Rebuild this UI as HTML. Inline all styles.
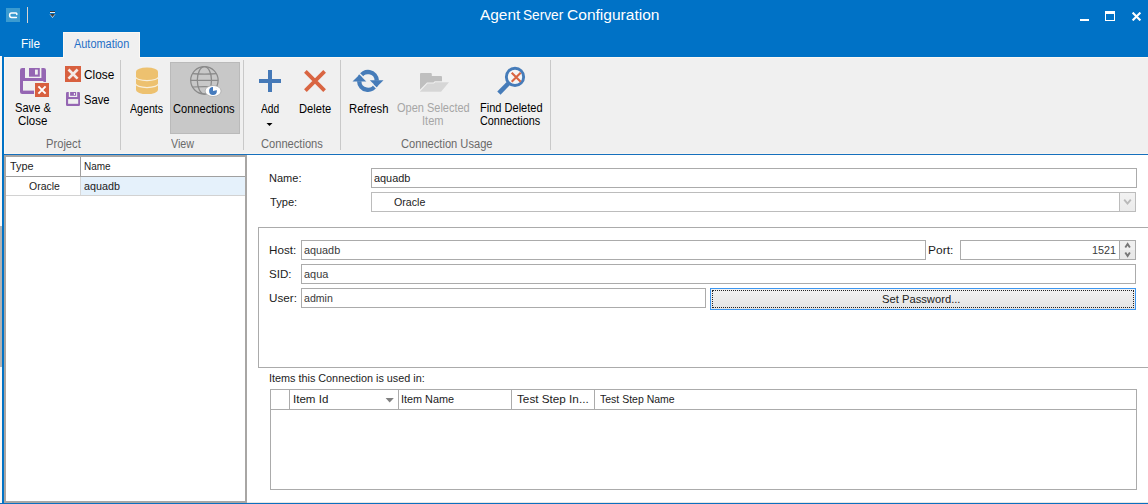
<!DOCTYPE html>
<html>
<head>
<meta charset="utf-8">
<title>Agent Server Configuration</title>
<style>
html,body{margin:0;padding:0;background:#fff;}
body{width:1148px;height:504px;overflow:hidden;font-family:"Liberation Sans",sans-serif;}
#app{position:relative;width:1148px;height:504px;overflow:hidden;background:#fff;}
#app div,#app svg,#app span{position:absolute;box-sizing:border-box;}
.t{white-space:pre;line-height:16px;transform-origin:0 50%;font-family:"Liberation Sans",sans-serif;}
.sep{width:1px;top:60px;height:90px;background:#c9c9c9;}
.inp{border:1px solid #ababab;background:#fff;}
.gl{background:#a0a0a0;}
</style>
</head>
<body>
<div id="app">
<!-- title bar -->
<div style="left:0;top:0;width:1148px;height:57px;background:#0072c6"></div>
<!-- app icon -->
<svg style="left:6px;top:8px" width="14" height="14" viewBox="0 0 14 14">
<rect width="14" height="14" fill="#3b9bd0"/>
<path d="M10.8 6.4 L10.8 5.8 Q10.6 5 9.6 5 L5.6 5 Q3.6 5 3.6 7.2 Q3.6 9.4 5.6 9.4 L10.4 9.4" fill="none" stroke="#fff" stroke-width="1.5" stroke-linecap="round" stroke-linejoin="round"/>
</svg>
<div style="left:27px;top:7px;width:1px;height:16px;background:#d6d3d0"></div>
<!-- qat dropdown -->
<svg style="left:49px;top:10px" width="8" height="9" viewBox="0 0 8 9">
<rect x="1" y="1" width="5" height="1" fill="#3a3a3a"/>
<rect x="1" y="2" width="5" height="1" fill="#e8f0f8"/>
<path d="M0.5 4 L6.5 4 L3.5 8 Z" fill="#dbe8f4"/>
<path d="M1 4 L6 4 L3.5 7 Z" fill="#3a3a3a"/>
</svg>
<!-- window buttons -->
<div style="left:1080px;top:19px;width:9px;height:2px;background:#fff"></div>
<div style="left:1105px;top:11px;width:10px;height:10px;border:1px solid #fff;border-top-width:3px"></div>
<svg style="left:1132px;top:12px" width="9" height="9" viewBox="0 0 9 9">
<path d="M0.6 0.6 L8.4 8.4 M8.4 0.6 L0.6 8.4" stroke="#fff" stroke-width="2.1" fill="none"/>
</svg>

<!-- ribbon -->
<div style="left:4px;top:57px;width:1144px;height:97px;background:#f0f0f0;border-top:1px solid #fcf8f3;border-left:1px solid #fbf7f2"></div>
<!-- tab -->
<div style="left:63px;top:32px;width:77px;height:26px;background:#f0f0f0;border:1px solid #fcf8f3;border-bottom:none"></div>
<div style="left:4px;top:153px;width:1144px;height:1px;background:#f8f4f0"></div>
<div style="left:0;top:154px;width:1148px;height:1px;background:#1570bd"></div>
<!-- left window frame -->
<div style="left:0;top:56px;width:2px;height:448px;background:#fbf8f5"></div>
<div style="left:0;top:226px;width:2px;height:141px;background:#b2b2b2"></div>
<div style="left:2px;top:56px;width:2px;height:448px;background:#0072c6"></div>
<div style="left:0;top:503px;width:1148px;height:1px;background:#0b70c0"></div>
<div style="left:4px;top:502px;width:1144px;height:1px;background:#e9e6e3"></div>

<div class="sep" style="left:120px"></div>
<div class="sep" style="left:243px"></div>
<div class="sep" style="left:340px"></div>
<div class="sep" style="left:550px"></div>

<!-- Save & Close large icon -->
<svg style="left:19px;top:67px" width="32" height="32" viewBox="0 0 32 32">
<rect x="1" y="1" width="26" height="26" rx="2.2" fill="#9566b3"/>
<rect x="6" y="0.5" width="16.4" height="10.5" fill="#f0f0f0"/>
<rect x="10" y="1" width="10.8" height="8.7" fill="#9566b3"/>
<rect x="16" y="2.6" width="2.8" height="5" fill="#f0f0f0"/>
<rect x="4" y="14" width="20.4" height="9.6" fill="#f0f0f0"/>
<rect x="15" y="15" width="15" height="15" fill="#f0f0f0"/>
<rect x="16" y="16" width="14" height="14" fill="#d8603f"/>
<path d="M19.4 19.4 L26.6 26.6 M26.6 19.4 L19.4 26.6" stroke="#fff" stroke-width="2" fill="none"/>
</svg>
<!-- Close small icon -->
<svg style="left:65px;top:66px" width="16" height="16" viewBox="0 0 16 16">
<rect width="16" height="16" fill="#d8603f"/>
<path d="M3.5 3.5 L12.6 12.6 M12.6 3.5 L3.5 12.6" stroke="#f4ece8" stroke-width="2.7" fill="none"/>
</svg>
<!-- Save small icon -->
<svg style="left:66px;top:92px" width="14" height="14" viewBox="0 0 14 14">
<rect x="0" y="0" width="14" height="14" rx="1.2" fill="#9566b3"/>
<rect x="2.8" y="-0.5" width="8.4" height="5.5" fill="#f0f0f0"/>
<rect x="4.1" y="0" width="6" height="3.8" fill="#9566b3"/>
<rect x="7.9" y="1" width="1.1" height="2" fill="#f0f0f0"/>
<rect x="2.1" y="7.1" width="10.1" height="4.7" fill="#f0f0f0"/>
</svg>
<!-- Agents icon -->
<svg style="left:135px;top:67px" width="24" height="28" viewBox="0 0 24 28">
<path d="M1 4.6 A11 4 0 0 1 23 4.6 L23 23.1 A11 4 0 0 1 1 23.1 Z" fill="#edc16f"/>
<path d="M0.6 9.9 A11.4 3.7 0 0 0 23.4 9.9 M0.6 16.8 A11.4 3.7 0 0 0 23.4 16.8" stroke="#f8efdc" stroke-width="1.25" fill="none"/>
</svg>
<!-- Connections selected button -->
<div style="left:170px;top:62px;width:70px;height:72px;background:#c8c8c8;border:1px solid #bababa"></div>
<svg style="left:188px;top:64px" width="36" height="36" viewBox="0 0 36 36">
<g fill="none" stroke="#8a8a8a" stroke-width="1.25">
<circle cx="16.4" cy="16.3" r="13.7"/>
<ellipse cx="16.4" cy="16.3" rx="7.1" ry="13.7"/>
<path d="M2.5 16.3 H30.3 M4.4 9.6 Q16.4 10.6 28.4 9.6 M4.4 23 Q16.4 22 28.4 23"/>
</g>
<ellipse cx="25.1" cy="27" rx="8" ry="5.5" fill="#fff" stroke="#a9a9a9" stroke-width="0.8"/>
<circle cx="25" cy="27" r="3.9" fill="#457bbd"/>
<path d="M25 27 L25 22.6 A4.4 4.4 0 0 1 29.3 26 Z" fill="#fff"/>
</svg>
<!-- Add icon -->
<svg style="left:259px;top:70px" width="22" height="22" viewBox="0 0 22 22">
<path d="M11 0 V22 M0 11 H22" stroke="#4579b7" stroke-width="4" fill="none"/>
</svg>
<svg style="left:266px;top:122px" width="7" height="5" viewBox="0 0 7 5"><path d="M0.5 1 L6.5 1 L3.5 4 Z" fill="#000"/></svg>
<!-- Delete icon -->
<svg style="left:303px;top:69px" width="24" height="24" viewBox="0 0 24 24">
<path d="M2.4 2.4 L21.6 21.6 M21.6 2.4 L2.4 21.6" stroke="#d96542" stroke-width="3.8" fill="none"/>
</svg>
<!-- Refresh icon -->
<svg style="left:351px;top:68px" width="34" height="26" viewBox="0 0 34 26">
<g fill="none" stroke="#467cb9" stroke-width="4.4">
<path d="M8.8 9.6 A8.8 8.8 0 0 1 25.8 12.6"/>
<path d="M8.2 13.2 A8.8 8.8 0 0 0 25.2 16.2"/>
</g>
<path d="M7.4 4.5 L17 14.1 M17 11.7 L26.6 21.3" stroke="#f0f0f0" stroke-width="1.5" fill="none"/>
<path d="M1.5 13.6 L15.3 13.6 L8.4 6.7 Z" fill="#467cb9"/>
<path d="M18.8 12.2 L32.5 12.2 L25.7 19 Z" fill="#467cb9"/>
</svg>
<!-- Open folder (disabled) -->
<svg style="left:419px;top:72px" width="32" height="22" viewBox="0 0 32 22">
<path d="M1 2 Q1 1 2 1 L11.8 1 Q12.8 1 12.8 2 L12.8 4.1 L22 4.1 Q23 4.1 23 5.1 L23 9.2 L15.8 9.2 L14.4 10.6 L8 10.6 L1 17.6 Z" fill="#bfbfbf"/>
<path d="M8.5 11.6 L14.9 11.6 L16.3 10.2 L30 10.2 L22 19.8 L0.8 19.8 Z" fill="#d6d6d6"/>
</svg>
<!-- Find deleted icon -->
<svg style="left:496px;top:65px" width="32" height="32" viewBox="0 0 32 32">
<path d="M12.3 18.5 L2.9 28.2" stroke="#467cb9" stroke-width="4.6" fill="none"/>
<circle cx="19" cy="11.9" r="8.65" fill="#f5f5f5" stroke="#467cb9" stroke-width="2.9"/>
<path d="M15.7 7.7 L24.7 16.8 M24.7 7.7 L15.7 16.8" stroke="#d96542" stroke-width="2.1" fill="none"/>
</svg>

<!-- left list -->
<div style="left:4px;top:155px;width:243px;height:348px;border:2px solid #a8a6a4;background:#fff"></div>
<div class="gl" style="left:6px;top:176px;width:239px;height:1px"></div>
<div class="gl" style="left:80px;top:157px;width:1px;height:20px"></div>
<div style="left:81px;top:177px;width:164px;height:18px;background:#e5f1fb"></div>
<div style="left:80px;top:177px;width:1px;height:18px;background:#d8d8d8"></div>
<div style="left:6px;top:195px;width:239px;height:1px;background:#d2d2d2"></div>

<!-- form -->
<div class="inp" style="left:371px;top:168px;width:766px;height:20px"></div>
<div class="inp" style="left:371px;top:192px;width:765px;height:20px;border-color:#bcbcbc"></div>
<div style="left:1119px;top:192px;width:17px;height:20px;border:1px solid #bcbcbc;background:linear-gradient(#f2f2f2,#ebebeb)"></div>
<svg style="left:1123px;top:198px" width="10" height="8" viewBox="0 0 10 8"><path d="M1.2 1.6 L4.5 5.6 L7.8 1.6" stroke="#b9b9b9" stroke-width="1.9" fill="none"/></svg>

<div style="left:258px;top:227px;width:900px;height:141px;border:1px solid #ababab"></div>
<div class="inp" style="left:301px;top:240px;width:625px;height:20px"></div>
<div class="inp" style="left:960px;top:240px;width:176px;height:20px"></div>
<div style="left:1119px;top:240px;width:17px;height:20px;border:1px solid #ababab;background:#f0f0f0"></div>
<div style="left:1120px;top:250px;width:15px;height:9px;background:#e9e9e9"></div>
<svg style="left:1123px;top:242px" width="10" height="16" viewBox="0 0 10 16">
<path d="M2.3 5.6 L4.6 2 L6.9 5.6" stroke="#777" stroke-width="1.9" fill="none"/>
<path d="M2.3 10.4 L4.6 14 L6.9 10.4" stroke="#777" stroke-width="1.9" fill="none"/>
</svg>
<div class="inp" style="left:301px;top:264px;width:835px;height:20px"></div>
<div class="inp" style="left:301px;top:288px;width:405px;height:20px"></div>
<!-- button -->
<div style="left:710px;top:288px;width:426px;height:22px;border:1px solid #3c96f0;background:linear-gradient(#f2f2f2,#e4e4e4)"></div>
<div style="left:712px;top:290px;width:422px;height:18px;border:1px dotted #222"></div>

<!-- grid -->
<div style="left:270px;top:389px;width:867px;height:101px;border:1px solid #ababab;background:#fff"></div>
<div class="gl" style="left:271px;top:409px;width:865px;height:1px;background:#ababab"></div>
<div style="left:289px;top:390px;width:1px;height:19px;background:#ababab"></div>
<div style="left:398px;top:390px;width:1px;height:19px;background:#ababab"></div>
<div style="left:511px;top:390px;width:1px;height:19px;background:#ababab"></div>
<div style="left:594px;top:390px;width:1px;height:19px;background:#ababab"></div>
<svg style="left:385px;top:398px" width="10" height="6" viewBox="0 0 10 6"><path d="M0.6 0.1 L8.8 0.1 L4.7 4.6 Z" fill="#808080"/></svg>

<!-- text -->
<span class="t" style="left:479.84px;top:7px;font-size:15.5px;color:#fff;transform:scaleX(0.9942)">Agent</span>
<span class="t" style="left:523.19px;top:7px;font-size:15.5px;color:#fff;transform:scaleX(0.8812)">Server</span>
<span class="t" style="left:567.16px;top:7px;font-size:15.5px;color:#fff;transform:scaleX(1.0031)">Configuration</span>
<span class="t" style="left:20.68px;top:36px;font-size:12.5px;color:#fff;transform:scaleX(0.9461)">File</span>
<span class="t" style="left:73.86px;top:36px;font-size:12.5px;color:#1f6fc6;transform:scaleX(0.8742)">Automation</span>
<span class="t" style="left:15.14px;top:100px;font-size:12.5px;color:#000;transform:scaleX(0.8900)">Save &amp;</span>
<span class="t" style="left:18.00px;top:113px;font-size:12.5px;color:#000;transform:scaleX(0.9183)">Close</span>
<span class="t" style="left:84.17px;top:67px;font-size:12.5px;color:#000;transform:scaleX(0.9476)">Close</span>
<span class="t" style="left:84.23px;top:92px;font-size:12.5px;color:#000;transform:scaleX(0.8970)">Save</span>
<span class="t" style="left:45.64px;top:136px;font-size:12.5px;color:#6a6a6a;transform:scaleX(0.8936)">Project</span>
<span class="t" style="left:129.66px;top:101px;font-size:12.5px;color:#000;transform:scaleX(0.8502)">Agents</span>
<span class="t" style="left:173.14px;top:101px;font-size:12.5px;color:#000;transform:scaleX(0.8873)">Connections</span>
<span class="t" style="left:171.35px;top:136px;font-size:12.5px;color:#6a6a6a;transform:scaleX(0.8554)">View</span>
<span class="t" style="left:261.27px;top:101px;font-size:12.5px;color:#000;transform:scaleX(0.8183)">Add</span>
<span class="t" style="left:298.54px;top:101px;font-size:12.5px;color:#000;transform:scaleX(0.8944)">Delete</span>
<span class="t" style="left:261.23px;top:136px;font-size:12.5px;color:#6a6a6a;transform:scaleX(0.8903)">Connections</span>
<span class="t" style="left:348.53px;top:101px;font-size:12.5px;color:#000;transform:scaleX(0.9034)">Refresh</span>
<span class="t" style="left:396.56px;top:100px;font-size:12.5px;color:#a6a6a6;transform:scaleX(0.8794)">Open Selected</span>
<span class="t" style="left:422.29px;top:113px;font-size:12.5px;color:#a6a6a6;transform:scaleX(0.8858)">Item</span>
<span class="t" style="left:479.75px;top:100px;font-size:12.5px;color:#000;transform:scaleX(0.8826)">Find Deleted</span>
<span class="t" style="left:479.76px;top:113px;font-size:12.5px;color:#000;transform:scaleX(0.8670)">Connections</span>
<span class="t" style="left:400.53px;top:136px;font-size:12.5px;color:#6a6a6a;transform:scaleX(0.8898)">Connection Usage</span>
<span class="t" style="left:9.76px;top:158px;font-size:11px;color:#1c1c1c;transform:scaleX(0.9867)">Type</span>
<span class="t" style="left:84.04px;top:158px;font-size:11px;color:#1c1c1c;transform:scaleX(0.9074)">Name</span>
<span class="t" style="left:28.85px;top:178px;font-size:11px;color:#1c1c1c;transform:scaleX(0.9523)">Oracle</span>
<span class="t" style="left:83.87px;top:178px;font-size:11px;color:#1c1c1c;transform:scaleX(0.9796)">aquadb</span>
<span class="t" style="left:268.54px;top:170px;font-size:11px;color:#1c1c1c;transform:scaleX(1.0012)">Name:</span>
<span class="t" style="left:373.66px;top:170px;font-size:11px;color:#1c1c1c;transform:scaleX(0.9909)">aquadb</span>
<span class="t" style="left:269.65px;top:194px;font-size:11px;color:#1c1c1c;transform:scaleX(1.0105)">Type:</span>
<span class="t" style="left:393.53px;top:194px;font-size:11px;color:#1c1c1c;transform:scaleX(0.9681)">Oracle</span>
<span class="t" style="left:269.19px;top:242px;font-size:11px;color:#1c1c1c;transform:scaleX(1.0589)">Host:</span>
<span class="t" style="left:303.66px;top:242px;font-size:11px;color:#3a3a3a;transform:scaleX(0.9853)">aquadb</span>
<span class="t" style="left:928.36px;top:242px;font-size:11px;color:#1c1c1c;transform:scaleX(1.0892)">Port:</span>
<span class="t" style="left:1091.68px;top:242px;font-size:11px;color:#3a3a3a;transform:scaleX(0.9797)">1521</span>
<span class="t" style="left:269.13px;top:266px;font-size:11px;color:#1c1c1c;transform:scaleX(1.0556)">SID:</span>
<span class="t" style="left:303.65px;top:266px;font-size:11px;color:#3a3a3a;transform:scaleX(0.9970)">aqua</span>
<span class="t" style="left:269.11px;top:290px;font-size:11px;color:#1c1c1c;transform:scaleX(1.0615)">User:</span>
<span class="t" style="left:303.69px;top:290px;font-size:11px;color:#3a3a3a;transform:scaleX(0.9615)">admin</span>
<span class="t" style="left:881.88px;top:291px;font-size:11px;color:#222;transform:scaleX(1.0188)">Set Password...</span>
<span class="t" style="left:268.90px;top:370px;font-size:11px;color:#1c1c1c;transform:scaleX(0.9834)">Items this Connection is used in:</span>
<span class="t" style="left:292.52px;top:391px;font-size:11px;color:#1c1c1c;transform:scaleX(1.0527)">Item Id</span>
<span class="t" style="left:401.49px;top:391px;font-size:11px;color:#1c1c1c;transform:scaleX(0.9860)">Item Name</span>
<span class="t" style="left:516.74px;top:391px;font-size:11px;color:#1c1c1c;transform:scaleX(1.0652)">Test Step In...</span>
<span class="t" style="left:599.76px;top:391px;font-size:11px;color:#1c1c1c;transform:scaleX(0.9533)">Test Step Name</span>
</div>
</body>
</html>
